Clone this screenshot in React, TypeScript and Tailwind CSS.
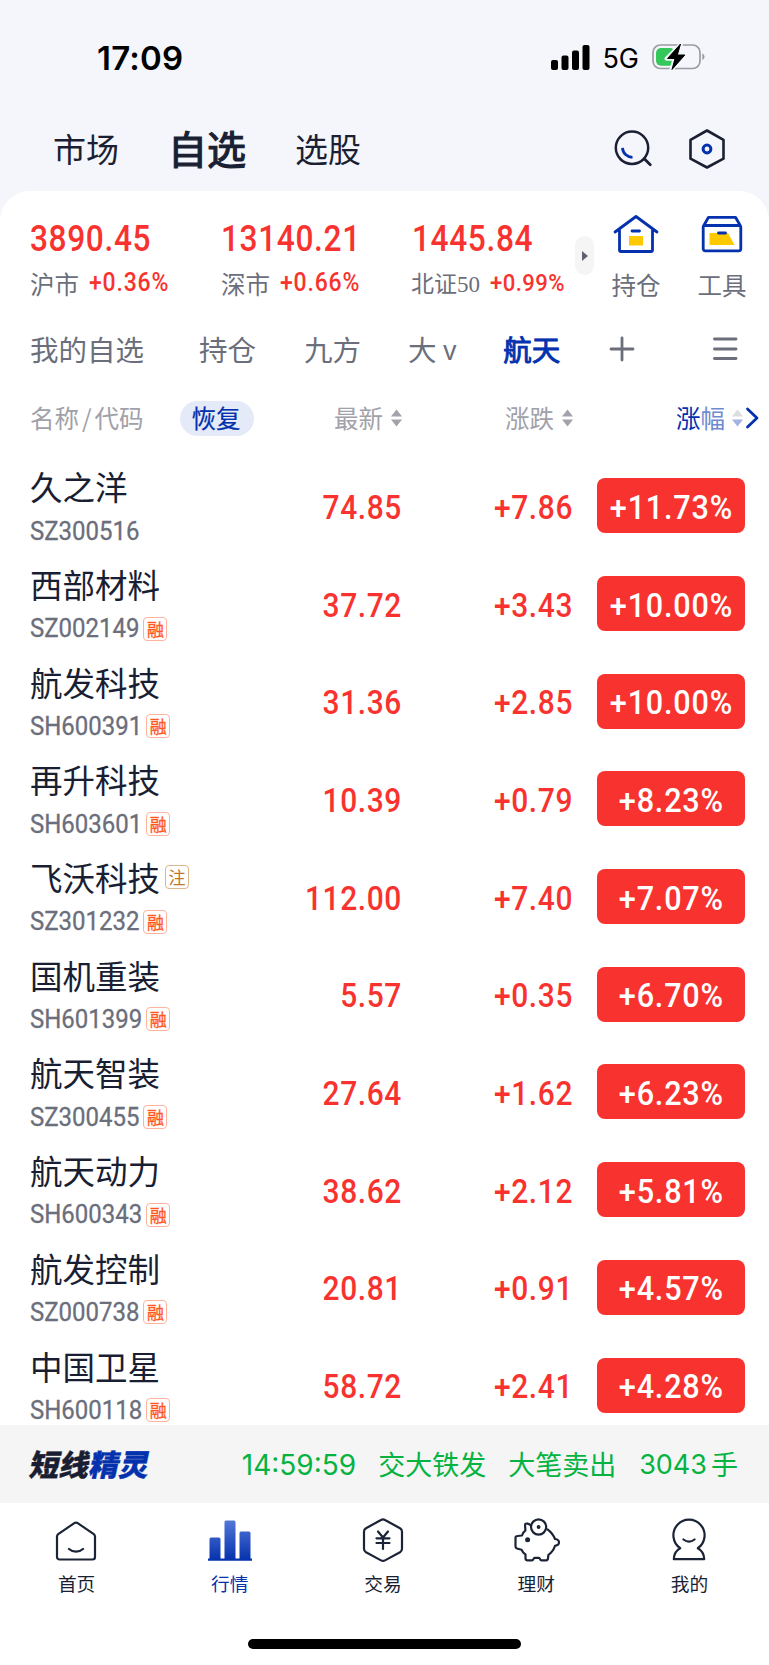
import React from 'react';

const CJK = "font-['Noto_Sans_CJK_SC',sans-serif]";
const NUM = "font-['Roboto',sans-serif] font-medium";

const indices = [
  { value: '3890.45', name: '沪市', change: '+0.36%' },
  { value: '13140.21', name: '深市', change: '+0.66%' },
  { value: '1445.84', name: '北证50', change: '+0.99%', serif: true },
];

const stocks = [
  { name: '久之洋', code: 'SZ300516', price: '74.85', diff: '+7.86', pct: '+11.73%', margin: false },
  { name: '西部材料', code: 'SZ002149', price: '37.72', diff: '+3.43', pct: '+10.00%', margin: true },
  { name: '航发科技', code: 'SH600391', price: '31.36', diff: '+2.85', pct: '+10.00%', margin: true },
  { name: '再升科技', code: 'SH603601', price: '10.39', diff: '+0.79', pct: '+8.23%', margin: true },
  { name: '飞沃科技', code: 'SZ301232', price: '112.00', diff: '+7.40', pct: '+7.07%', margin: true, note: true },
  { name: '国机重装', code: 'SH601399', price: '5.57', diff: '+0.35', pct: '+6.70%', margin: true },
  { name: '航天智装', code: 'SZ300455', price: '27.64', diff: '+1.62', pct: '+6.23%', margin: true },
  { name: '航天动力', code: 'SH600343', price: '38.62', diff: '+2.12', pct: '+5.81%', margin: true },
  { name: '航发控制', code: 'SZ000738', price: '20.81', diff: '+0.91', pct: '+4.57%', margin: true },
  { name: '中国卫星', code: 'SH600118', price: '58.72', diff: '+2.41', pct: '+4.28%', margin: true },
];

function StatusBar() {
  return (
    <div className="flex h-[114px] items-center pl-[97px] pr-[63px] pt-px font-['Inter',sans-serif] text-black">
      <span className="mt-px text-[33px] font-semibold leading-none tracking-[0.2px]">17:09</span>
      <svg className="ml-auto" width="39" height="25" viewBox="0 0 39 25">
        <rect x="0" y="15" width="7" height="10" rx="2" />
        <rect x="10.5" y="10.5" width="7" height="14.5" rx="2" />
        <rect x="21" y="5.5" width="7" height="19.5" rx="2" />
        <rect x="31.5" y="0" width="7" height="25" rx="2" />
      </svg>
      <span className="ml-3 mt-[2px] text-[27px] leading-none">5G</span>
      <svg className="ml-3 mb-px" width="55" height="28" viewBox="0 0 55 28">
        <rect x="2" y="2" width="47" height="23.5" rx="7.5" fill="none" stroke="#9b9ca1" strokeWidth="1.7" />
        <path d="M51.3 10.5v6.6c1.3-.6 2.2-1.7 2.2-3.3s-.9-2.7-2.2-3.3z" fill="#9b9ca1" />
        <rect x="5" y="5" width="19" height="17.8" rx="5" fill="#34c759" />
        <path d="M30 1L15.5 15.7h8L20.5 26.5 34 12h-8z" fill="#000" stroke="#f4f6fb" strokeWidth="4" strokeLinejoin="round" />
        <path d="M29.5 1L16.5 15.5h7.5L21 26.5 33.8 12h-7.5z" fill="#000" stroke="#000" strokeWidth="1" strokeLinejoin="round" />
      </svg>
    </div>
  );
}

function TopTabs() {
  return (
    <div className="flex h-[77px] items-center pb-2 pl-[53px] pr-[43px] text-[#1b1f33]">
      <span className="text-[33px]">市场</span>
      <span className="-mt-[3px] ml-[49px] text-[39px] [-webkit-text-stroke:1.2px_currentColor]">自选</span>
      <span className="ml-[49px] text-[33px]">选股</span>
      <svg className="mb-[2px] ml-auto" width="40" height="40" viewBox="0 0 40 40" fill="none" strokeLinecap="round">
        <circle cx="19" cy="19.8" r="16.2" stroke="#1b1f33" strokeWidth="2.5" />
        <path d="M31.500 31l5.800 5.800" stroke="#1b1f33" strokeWidth="2.8" />
        <path d="M9.500 19.8c.3 5.5 4.5 9.3 10 9.5" stroke="#0431ad" strokeWidth="2.8" strokeLinecap="butt" />
      </svg>
      <svg className="ml-[35px]" width="38" height="42" viewBox="0 0 38 42" fill="none">
        <path d="M19 2.5l16.5 9.3v18.9L19 39.5 2.5 30.7V11.8z" stroke="#1b1f33" strokeWidth="2.6" strokeLinejoin="round" />
        <circle cx="19" cy="21" r="3.9" stroke="#0431ad" strokeWidth="3" />
      </svg>
    </div>
  );
}

function IndexBar() {
  return (
    <div className="flex h-[120px] pl-[31px] pt-[26px]">
      {indices.map((item) => (
        <div key={item.name} className="w-[191px] shrink-0 whitespace-nowrap">
          <div className={`${NUM} -ml-px origin-left scale-x-[0.88] text-[36px] leading-[44px] tracking-[0.7px] text-[#f8332f]`}>{item.value}</div>
          <div className="mt-[6px] flex items-center leading-8">
            {item.serif ? (
              <span className="-ml-[2px] mt-[2px] font-['Liberation_Serif','Noto_Sans_CJK_SC',serif] text-[23px] text-[#6b6e7b]">{item.name}</span>
            ) : (
              <span className="-ml-px text-[24.5px] text-[#6b6e7b]">{item.name}</span>
            )}
            <span className={`${NUM} mb-[2px] ml-[10px] origin-left scale-x-[0.92] text-[#f8332f] ${item.serif ? 'text-[24px] tracking-[0.5px]' : 'text-[25px] tracking-[0.9px]'}`}>
              {item.change}
            </span>
          </div>
        </div>
      ))}
      <div className="-ml-[29px] mt-[19px] flex h-[39px] w-[19px] shrink-0 items-center justify-center rounded-full bg-[#f5f5f5]">
        <svg width="6" height="10" viewBox="0 0 6 10"><path d="M0 0l6 5-6 5z" fill="#5f6270" /></svg>
      </div>
      <div className="-mt-[3px] ml-[18px] flex w-[48px] flex-col items-center text-[24.5px] leading-8 text-[#6b6e7b]">
        <svg width="46" height="40" viewBox="0 0 46 40" fill="none" stroke="#0431ad" strokeWidth="2.8" strokeLinecap="round" strokeLinejoin="round">
          <path d="M2 18L23 2.5l21 15.500M6.500 15.500v20.500a1.500 1.500 0 0 0 1.500 1.500h30a1.500 1.500 0 0 0 1.500-1.500V15.500" />
          <path d="M16 22h14v9.500H16z" fill="#ffc900" stroke="none" />
          <path d="M19 17h7.500" />
        </svg>
        <span className="mt-[15px] whitespace-nowrap">持仓</span>
      </div>
      <div className="-mt-[3px] ml-[38px] flex w-[48px] flex-col items-center text-[24.5px] leading-8 text-[#6b6e7b]">
        <svg width="42" height="40" viewBox="0 0 42 40" fill="none" stroke="#0431ad" strokeWidth="2.8" strokeLinecap="round" strokeLinejoin="round">
          <path d="M2.500 12L7.500 3.300h27l5 8.700M4 11.500h34a1.800 1.800 0 0 1 1.800 1.800v21.500a2 2 0 0 1-2 2h-33.600a2 2 0 0 1-2-2V13.300A1.800 1.800 0 0 1 4 11.500z" />
          <path d="M8.500 19h18.500l6.500 12h-25z" fill="#ffc900" stroke="none" />
          <path d="M17.500 19h7" />
        </svg>
        <span className="mt-[15px] whitespace-nowrap">工具</span>
      </div>
    </div>
  );
}

function GroupTabs() {
  return (
    <div className="flex h-[78px] items-center pb-[2px] pl-[30px] pr-[31px] text-[28.5px] text-[#6b6e7b]">
      <span>我的自选</span>
      <span className="ml-[55px]">持仓</span>
      <span className="ml-12">九方</span>
      <span className="ml-[47px] flex items-center gap-[6px]">
        大<span className="mt-[3px] font-['Inter',sans-serif] text-[26px]">v</span>
      </span>
      <span className="ml-[46px] text-[#0431ad] [-webkit-text-stroke:0.9px_currentColor]">航天</span>
      <svg className="ml-[49px]" width="26" height="26" viewBox="0 0 26 26" stroke="#6b6e7b" strokeWidth="2.8" strokeLinecap="round">
        <path d="M2 13h22M13 2v22" />
      </svg>
      <svg className="ml-auto" width="26" height="26" viewBox="0 0 26 26" stroke="#6b6e7b" strokeWidth="2.9" strokeLinecap="round">
        <path d="M2.500 3h21.500M2.500 13h21.500M2.500 22.500h21.500" />
      </svg>
    </div>
  );
}

function SortIcon({ up = '#a3a4ab', down = '#a3a4ab' }: { up?: string; down?: string }) {
  return (
    <svg width="11" height="18" viewBox="0 0 11 18">
      <path d="M5.500 .5L11 7.500H0z" fill={up} />
      <path d="M5.500 17.500L11 10.500H0z" fill={down} />
    </svg>
  );
}

function ColumnHeader() {
  return (
    <div className="flex h-[68px] items-center pb-[10px] pl-[30px] pr-[10px] text-[24.5px] text-[#a0a1a9]">
      <span className="flex w-[150px] items-center">名称<span className="px-[3px]">/</span>代码</span>
      <span className="flex h-[35px] w-[74px] items-center justify-center rounded-full bg-[#e4eaf7] pr-[2px] text-[#0431ad] [-webkit-text-stroke:0.2px_currentColor]">恢复</span>
      <span className="flex w-[148px] items-center justify-end gap-[8px]">最新<SortIcon /></span>
      <span className="flex w-[171px] items-center justify-end gap-[8px]">涨跌<SortIcon /></span>
      <span className="ml-auto flex items-center">
        <span className="text-[#0431ad]">涨<span className="text-[#6f8bd0]">幅</span></span>
        <span className="ml-[7px] flex"><SortIcon up="#dcdde1" down="#a3b4e3" /></span>
        <svg className="ml-[2px]" width="14" height="22" viewBox="0 0 14 22" fill="none" stroke="#0431ad" strokeWidth="2.8" strokeLinecap="round" strokeLinejoin="round">
          <path d="M2.500 2l9.500 9-9.500 9" />
        </svg>
      </span>
    </div>
  );
}

function StockRow({ stock }: { stock: (typeof stocks)[number] }) {
  return (
    <div className="flex h-[97.7px] items-center pl-[30px] pr-[24px]">
      <div className="w-[201px] pb-[3px]">
        <div className="flex items-center text-[32.5px] leading-[42px] text-[#191e32]">
          {stock.name}
          {stock.note && (
            <span className="mb-px ml-[5px] flex h-6 w-6 items-center justify-center rounded border border-[#dcb78a] text-[17px] leading-none text-[#c0762a]">注</span>
          )}
        </div>
        <div className="mt-[12px] flex h-6 items-center">
          <span className="-mr-[7px] origin-left scale-x-[0.94] font-['Roboto',sans-serif] text-[25.5px] leading-none text-[#6b6e7b] [-webkit-text-stroke:0.3px_currentColor]">{stock.code}</span>
          {stock.margin && (
            <span className="mb-px ml-1 flex h-6 w-6 items-center justify-center rounded border border-[#ffb39c] pb-px text-[17px] leading-none text-[#ff5722] [-webkit-text-stroke:0.3px_currentColor]">融</span>
          )}
        </div>
      </div>
      <div className={`${NUM} mt-[2px] w-[171px] origin-right scale-x-[0.88] text-right text-[34px] leading-none tracking-[0.7px] text-[#f8332f]`}>{stock.price}</div>
      <div className={`${NUM} mt-[2px] w-[171px] origin-right scale-x-[0.88] text-right text-[34px] leading-none tracking-[0.7px] text-[#f8332f]`}>{stock.diff}</div>
      <div className="ml-auto flex h-[55px] w-[148px] items-center justify-center rounded-lg bg-[#f8332f]">
        <span className={`${NUM} mt-[2px] scale-x-[0.9] text-[34px] leading-none tracking-[0.9px] text-white`}>{stock.pct}</span>
      </div>
    </div>
  );
}

function Ticker() {
  return (
    <div className="flex h-[78px] items-center bg-[#f5f5f5] pl-[31px] pr-[31px] text-[27px] text-[#05b341]">
      <span className="mb-[2px] -skew-x-12 text-[29.8px] font-black text-[#191e32] [-webkit-text-stroke:0.4px_currentColor]">
        短线<span className="text-[#0431ad]">精灵</span>
      </span>
      <span className="ml-auto mt-px font-['Inter',sans-serif] text-[28px]">14:59:59</span>
      <span className="ml-[22px]">交大铁发</span>
      <span className="ml-[22px]">大笔卖出</span>
      <span className="ml-[23px] flex items-center gap-1"><span className="mt-[2px] font-['Inter',sans-serif]">3043</span>手</span>
    </div>
  );
}

const navItems = [
  {
    label: '首页',
    icon: (
      <path d="M3 17.5c0-1 .4-1.800 1.200-2.400L20.300 4.200a3 3 0 0 1 3.400 0l16.100 10.900c.8.600 1.200 1.400 1.200 2.400v20.500a2.500 2.500 0 0 1-2.500 2.500h-33A2.500 2.500 0 0 1 3 38zM15 30c4 3.600 10 3.600 14 0" />
    ),
  },
  {
    label: '行情',
    active: true,
    icon: (
      <g stroke="none" fill="url(#bars)" transform="translate(1 0)">
        <path d="M1.500 20a1.500 1.500 0 0 1 1.500-1.500h8a1.500 1.500 0 0 1 1.500 1.500v20h-11zM16.500 3a1.500 1.500 0 0 1 1.500-1.500h8A1.500 1.500 0 0 1 27.500 3v37h-11zM31.500 14a1.500 1.500 0 0 1 1.500-1.500h8a1.500 1.500 0 0 1 1.500 1.500v26h-11zM0 39.500h44v2.200H0z" />
      </g>
    ),
  },
  {
    label: '交易',
    icon: (
      <path d="M20 1a4 4 0 0 1 4 0l15 8.200a4 4 0 0 1 2 3.500v17a4 4 0 0 1-2 3.500l-15 8.200a4 4 0 0 1-4 0L5 33.200A4 4 0 0 1 3 29.700V12.700a4 4 0 0 1 2-3.500zM17 12.500l5 6 5-6M22 18.500v11.500M15.500 19.300h13M15.500 24h13" />
    ),
  },
  {
    label: '理财',
    icon: (
      <>
        <circle cx="24.6" cy="8" r="7.6" />
        <circle cx="24.6" cy="8" r="1.9" fill="#1b2436" stroke="none" />
        <circle cx="13.6" cy="20.700" r="2.500" fill="#1b2436" stroke="none" />
        <path d="M17 6.500C14.500 4.500 12 4 11.300 5c-.6 1 .2 4 0 6.700C9.800 12.800 8.700 14.300 8 16.500L3.500 17A2 2 0 0 0 1.500 19v8.500a2 2 0 0 0 1.500 2l4.500 1.200c.8 2 2.200 3.600 4 4.800v3.800a2 2 0 0 0 2 2h4.500c2 0 1.500-2.500 2.500-2.500h4.500c1 0 .5 2.500 2.500 2.500h4.500a2 2 0 0 0 2-2l.4-3.500c3-2 5.500-5 6.600-9 2.500-.3 4-1.500 4-3.500s-1.500-3-4-3.300c-1.500-4-4.500-7.500-7.500-9.700" />
      </>
    ),
  },
  {
    label: '我的',
    icon: (
      <path d="M13.200 29.200A15.600 15.600 0 1 1 30.800 29.200C35 31.500 37.200 35 37.200 40.200H6.800C6.800 35 9 31.500 13.200 29.200zM16.500 20.500c3.300 2.600 7.700 2.600 11 0" />
    ),
  },
];

function BottomNav() {
  return (
    <nav className="flex h-[104px] w-[766px] pt-[16px]">
      {navItems.map((item) => (
        <div key={item.label} className={`flex flex-1 flex-col items-center text-[18.7px] leading-7 ${item.active ? 'text-[#0431ad]' : 'text-[#191e32]'}`}>
          <svg className="mr-px overflow-visible" width="44" height="44" viewBox="0 0 44 44" fill="none" stroke="#1b2436" strokeWidth="2.2" strokeLinecap="round" strokeLinejoin="round">
            {item.active && (
              <defs>
                <linearGradient id="bars" x1="0" y1="0" x2="0" y2="1">
                  <stop offset="0" stopColor="#5277d8" />
                  <stop offset="1" stopColor="#0431ad" />
                </linearGradient>
              </defs>
            )}
            {item.icon}
          </svg>
          <span className="mt-[6px]">{item.label}</span>
        </div>
      ))}
    </nav>
  );
}

export default function App() {
  return (
    <main className={`${CJK} h-[1665px] w-[769px] overflow-hidden bg-[#f4f6fb]`}>
      <StatusBar />
      <TopTabs />
      <div className="flex h-[1474px] flex-col rounded-t-[30px] bg-white">
        <IndexBar />
        <GroupTabs />
        <ColumnHeader />
        <div className="h-[968px] shrink-0 overflow-hidden">
          {stocks.map((s) => (
            <StockRow key={s.code} stock={s} />
          ))}
        </div>
        <Ticker />
        <BottomNav />
        <div className="mx-auto mt-[32px] h-[10px] w-[273px] rounded-full bg-black" />
      </div>
    </main>
  );
}
